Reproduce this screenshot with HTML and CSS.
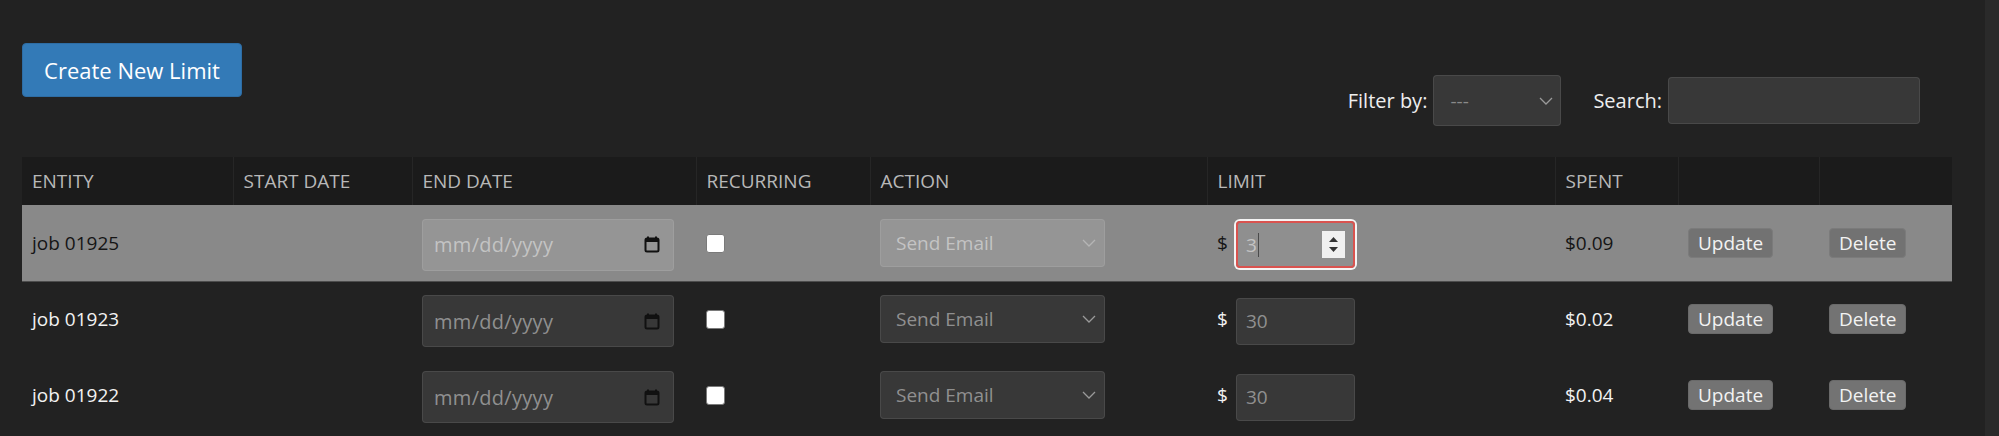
FILE: index.html
```html
<!DOCTYPE html>
<html>
<head>
<meta charset="utf-8">
<link rel="stylesheet" href="styles.css">
</head>
<body>
<div class="page">
  <main class="main">
    <div class="toolbar">
      <button class="btn-primary">Create New Limit</button>
      <div class="filters">
        <label class="flabel">Filter by:</label>
        <div class="fselect"><span class="ph">---</span><svg class="chev" width="14" height="8" viewBox="0 0 14 8"><path d="M1 1l6 6 6-6" fill="none" stroke="#9a9a9a" stroke-width="1.3"/></svg></div>
        <label class="flabel slabel">Search:</label>
        <div class="finput"></div>
      </div>
    </div>
    <table class="limits">
      <colgroup>
        <col style="width:211px"><col style="width:179px"><col style="width:284px"><col style="width:174px"><col style="width:337px"><col style="width:348px"><col style="width:123px"><col style="width:141px"><col style="width:133px">
      </colgroup>
      <thead>
        <tr><th>ENTITY</th><th>START DATE</th><th>END DATE</th><th>RECURRING</th><th>ACTION</th><th>LIMIT</th><th>SPENT</th><th></th><th></th></tr>
      </thead>
      <tbody>
        <tr class="active">
          <td>job 01925</td>
          <td></td>
          <td><div class="field date"><span class="ph">mm/dd/yyyy</span><svg class="cal" width="16" height="17" viewBox="0 0 16 17"><path d="M4 0.5v3M12 0.5v3" stroke="#111" stroke-width="2"/><rect x="1.5" y="2.5" width="13" height="13" rx="1.5" fill="none" stroke="#111" stroke-width="2"/><rect x="1.5" y="2.5" width="13" height="3.5" fill="#111"/></svg></div></td>
          <td><span class="check"></span></td>
          <td><div class="field select"><span class="ph">Send Email</span><svg class="chev" width="14" height="8" viewBox="0 0 14 8"><path d="M1 1l6 6 6-6" fill="none" stroke="#b5b5b5" stroke-width="1.3"/></svg></div></td>
          <td><span class="dollar">$</span><div class="field num focus"><span class="val">3</span><span class="caret"></span><span class="spin"><svg width="23" height="27" viewBox="0 0 23 27"><path d="M7 11l4.5-5 4.5 5z" fill="#333"/><path d="M7 16l4.5 5 4.5-5z" fill="#333"/></svg></span></div></td>
          <td>$0.09</td>
          <td><button class="btn-gray">Update</button></td>
          <td><button class="btn-gray">Delete</button></td>
        </tr>
        <tr>
          <td>job 01923</td>
          <td></td>
          <td><div class="field date"><span class="ph">mm/dd/yyyy</span><svg class="cal" width="16" height="17" viewBox="0 0 16 17"><path d="M4 0.5v3M12 0.5v3" stroke="#111" stroke-width="2"/><rect x="1.5" y="2.5" width="13" height="13" rx="1.5" fill="none" stroke="#111" stroke-width="2"/><rect x="1.5" y="2.5" width="13" height="3.5" fill="#111"/></svg></div></td>
          <td><span class="check"></span></td>
          <td><div class="field select"><span class="ph">Send Email</span><svg class="chev" width="14" height="8" viewBox="0 0 14 8"><path d="M1 1l6 6 6-6" fill="none" stroke="#9a9a9a" stroke-width="1.3"/></svg></div></td>
          <td><span class="dollar">$</span><div class="field num"><span class="ph">30</span></div></td>
          <td>$0.02</td>
          <td><button class="btn-gray">Update</button></td>
          <td><button class="btn-gray">Delete</button></td>
        </tr>
        <tr>
          <td>job 01922</td>
          <td></td>
          <td><div class="field date"><span class="ph">mm/dd/yyyy</span><svg class="cal" width="16" height="17" viewBox="0 0 16 17"><path d="M4 0.5v3M12 0.5v3" stroke="#111" stroke-width="2"/><rect x="1.5" y="2.5" width="13" height="13" rx="1.5" fill="none" stroke="#111" stroke-width="2"/><rect x="1.5" y="2.5" width="13" height="3.5" fill="#111"/></svg></div></td>
          <td><span class="check"></span></td>
          <td><div class="field select"><span class="ph">Send Email</span><svg class="chev" width="14" height="8" viewBox="0 0 14 8"><path d="M1 1l6 6 6-6" fill="none" stroke="#9a9a9a" stroke-width="1.3"/></svg></div></td>
          <td><span class="dollar">$</span><div class="field num"><span class="ph">30</span></div></td>
          <td>$0.04</td>
          <td><button class="btn-gray">Update</button></td>
          <td><button class="btn-gray">Delete</button></td>
        </tr>
      </tbody>
    </table>
  </main>
  <div class="track"></div>
</div>
</body>
</html>
```
FILE: styles.css
```css
html, body {
  margin: 0;
  padding: 0;
  background: #222222;
  height: 100%;
  overflow: hidden;
}
body {
  font-family: "Open Sans", "Noto Sans", sans-serif;
  color: #eeeeee;
}
.page {
  display: flex;
  height: 436px;
}
.main {
  flex: 1;
  padding: 43px 33px 0 22px;
}
.track {
  width: 14px;
  background: #2a2a2a;
}
.toolbar {
  display: flex;
  justify-content: space-between;
  align-items: flex-start;
}
.btn-primary {
  width: 220px;
  height: 54px;
  background: #337ab7;
  border: 1px solid #2e6da4;
  border-radius: 4px;
  color: #ffffff;
  font-family: "Open Sans", sans-serif;
  font-size: 22px;
  padding: 0;
}
.filters {
  display: flex;
  align-items: center;
  margin-top: 32px;
  margin-right: 32px;
  height: 51px;
}
.flabel {
  font-size: 20px;
  color: #eeeeee;
  margin-right: 6px;
}
.slabel {
  margin-left: 32px;
}
.fselect {
  box-sizing: border-box;
  width: 128px;
  height: 51px;
  border: 1px solid rgba(255,255,255,0.09);
  background: rgba(255,255,255,0.1);
  border-radius: 4px;
  display: flex;
  align-items: center;
  justify-content: space-between;
  padding: 0 7px 0 16px;
  font-size: 19px;
}
.fselect .ph { color: #8a8a8a; }
.finput {
  box-sizing: border-box;
  width: 252px;
  height: 47px;
  border: 1px solid rgba(255,255,255,0.09);
  background: rgba(255,255,255,0.1);
  border-radius: 4px;
}
.limits {
  margin-top: 31px;
  border-collapse: collapse;
  table-layout: fixed;
  width: 1930px;
  font-size: 19px;
}
.limits th {
  background: #1b1b1b;
  height: 48px;
  padding: 0 10px;
  text-align: left;
  font-weight: 400;
  color: #b8b8b8;
  border-left: 1px solid #262626;
  box-sizing: border-box;
}
.limits th:first-child { border-left: none; }
.limits td {
  height: 76px;
  padding: 0 10px;
  vertical-align: middle;
  color: #f2f2f2;
  box-sizing: border-box;
  white-space: nowrap;
}
.limits tr.active td {
  background: #898989;
  color: #151515;
  border-bottom: 1px solid #4d4d4d;
}
.field {
  box-sizing: border-box;
  display: inline-flex;
  align-items: center;
  vertical-align: middle;
  border: 1px solid rgba(255,255,255,0.09);
  background: rgba(255,255,255,0.1);
  border-radius: 4px;
  font-size: 19px;
  margin-top: 4px;
}
.ph { color: rgba(255,255,255,0.45); }
.date {
  width: 252px;
  height: 52px;
  justify-content: space-between;
  padding: 0 13px 0 11px;
  font-size: 20px;
  letter-spacing: 0.3px;
}
.cal { display: block; }
.select {
  width: 225px;
  height: 48px;
  justify-content: space-between;
  padding: 0 8px 0 15px;
  margin-top: 0;
}
.chev { display: block; }
.check {
  display: inline-block;
  vertical-align: middle;
  box-sizing: border-box;
  width: 19px;
  height: 19px;
  background: #ffffff;
  border: 1px solid #7a7a7a;
  border-radius: 3px;
  margin-top: -3px;
}
.dollar {
  display: inline-block;
  vertical-align: middle;
  width: 19px;
}
.num {
  width: 119px;
  height: 47px;
  padding: 0 8px 0 9px;
}
.num.focus {
  border: 2px solid #d9534f;
  box-shadow: 0 0 0 2px #f4f4f4;
  background: rgba(255,255,255,0.06);
  padding-left: 8px;
}
.val { color: #c4c4c4; }
.caret {
  display: inline-block;
  width: 1px;
  height: 24px;
  background: #4a4a4a;
  margin-left: 1px;
}
.spin {
  margin-left: auto;
  width: 23px;
  height: 27px;
  background: #f0f0f0;
  display: block;
}
.spin svg { display: block; }
.btn-gray {
  font-family: "Open Sans", sans-serif;
  font-size: 19px;
  color: #f2f2f2;
  background: #737373;
  border: 1px solid #6a6a6a;
  border-radius: 4px;
  height: 30px;
  padding: 0 9px;
  line-height: 26px;
  vertical-align: middle;
}
.limits tr.active .btn-gray {
  background: #727272;
  border-color: #7b7b7b;
}
```
